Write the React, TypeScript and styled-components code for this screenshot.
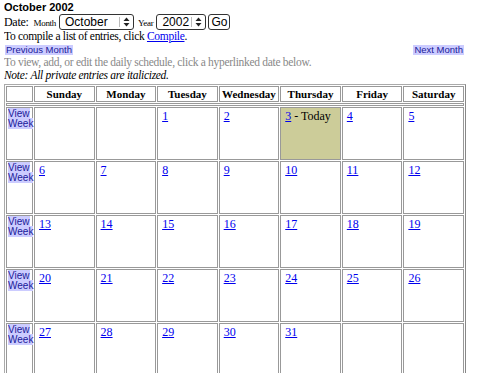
import React from 'react'
import styled, { createGlobalStyle } from 'styled-components'

const GlobalStyle = createGlobalStyle`
    body {
        margin: 2px 4px;
        background: #fff;
        font-family: 'Liberation Serif', 'Times New Roman', serif;
        font-size: 12px;
        color: #000;
    }
`;

const Title = styled.div`
    font-family: 'Liberation Sans', Arial, sans-serif;
    font-weight: bold;
    font-size: 11px;
    line-height: 11px;
`;

const DateRow = styled.div`
    display: flex;
    align-items: center;
    height: 17px;
`;

const Label = styled.span<{ $small?: boolean; $gap?: number }>`
    font-size: ${p => (p.$small ? '9px' : '12px')};
    letter-spacing: -0.3px;
    margin-left: ${p => p.$gap ?? 0}px;
    margin-right: ${p => (p.$small ? '3px' : '5px')};
    padding-top: 2px;
`;

const Popup = styled.div<{ $w: number }>`
    display: flex;
    align-items: center;
    width: ${p => p.$w}px;
    height: 14px;
    border: 1px solid #333;
    border-radius: 3px;
    background: #fff;
    font-family: 'Liberation Sans', Arial, sans-serif;
    font-size: 12px;
    margin-right: 2px;
`;

const PopupText = styled.span`
    flex: 1;
    padding-left: 5px;
    line-height: 14px;
    white-space: nowrap;
`;

const PopupArrow = styled.span`
    flex-shrink: 0;
    width: 13px;
    border-left: 1px solid #bbb;
    height: 10px;
    display: flex;
    align-items: center;
    justify-content: center;
`;

const GoButton = styled.div`
    height: 14px;
    padding: 0 2px;
    border: 1px solid #333;
    border-radius: 3px;
    font-family: 'Liberation Sans', Arial, sans-serif;
    font-size: 12px;
    line-height: 14px;
`;

const Line = styled.div<{ $gray?: boolean; $italic?: boolean }>`
    font-size: 11.5px;
    line-height: 13px;
    letter-spacing: -0.3px;
    color: ${p => (p.$gray ? '#888' : '#000')};
    font-style: ${p => (p.$italic ? 'italic' : 'normal')};
`;

const Link = styled.a`
    color: #0000ee;
    text-decoration: underline;
`;

const NavRow = styled.div`
    display: flex;
    justify-content: space-between;
    margin: 2px 9px 1px 1px;
    height: 10px;
`;

const NavLink = styled.span`
    background: #ccccff;
    color: #1a1a99;
    font-family: 'Liberation Sans', Arial, sans-serif;
    font-size: 9.5px;
    line-height: 10px;
    padding: 0 1px;
`;

const Calendar = styled.table`
    width: 462px;
    margin-top: 2px;
    border-collapse: separate;
    border-spacing: 1px;
    border: 1px solid #aaa;
    border-right-color: #888;
    border-bottom-color: #888;
    table-layout: fixed;
`;

const HeadCell = styled.th`
    border: 1px solid #999;
    height: 14px;
    padding: 0;
    font-size: 11px;
    font-weight: bold;
    text-align: center;
    line-height: 14px;
`;

const Separator = styled.td`
    border: 1px solid #999;
    height: 1px;
    padding: 0;
    line-height: 0;
    font-size: 0;
`;

const WeekCell = styled.td`
    box-sizing: border-box;
    border: 1px solid #999;
    height: 53px;
    padding: 1px;
    vertical-align: top;
    font-size: 10px;
    line-height: 10px;
`;

const ViewWeek = styled.span`
    background: #ccccff;
    color: #1a1a99;
    font-family: 'Liberation Sans', Arial, sans-serif;
    font-size: 10px;
    line-height: 10px;
`;

const DayCell = styled.td<{ $today?: boolean }>`
    box-sizing: border-box;
    border: 1px solid #999;
    height: 53px;
    padding: 2px 4px;
    vertical-align: top;
    background: ${p => (p.$today ? '#cccc99' : '#fff')};
    font-size: 12px;
    line-height: 12px;
`;

const DayLink = styled.a`
    color: #0000ee;
    text-decoration: underline;
`;

const days = ['Sunday', 'Monday', 'Tuesday', 'Wednesday', 'Thursday', 'Friday', 'Saturday'];

const weeks: (number | null)[][] = [
    [null, null, 1, 2, 3, 4, 5],
    [6, 7, 8, 9, 10, 11, 12],
    [13, 14, 15, 16, 17, 18, 19],
    [20, 21, 22, 23, 24, 25, 26],
    [27, 28, 29, 30, 31, null, null],
];

const Arrows = () => (
    <svg width="7" height="10" viewBox="0 0 7 10">
        <path d="M3.5 0.5 L6.5 4 L0.5 4 Z" fill="#222" />
        <path d="M3.5 9.5 L6.5 6 L0.5 6 Z" fill="#222" />
    </svg>
);

const App: React.FC = () => {
    return (
        <>
            <GlobalStyle />
            <Title>October 2002</Title>
            <DateRow>
                <Label>Date:</Label>
                <Label $small>Month</Label>
                <Popup $w={73}>
                    <PopupText>October</PopupText>
                    <PopupArrow><Arrows /></PopupArrow>
                </Popup>
                <Label $small $gap={2}>Year</Label>
                <Popup $w={48}>
                    <PopupText>2002</PopupText>
                    <PopupArrow><Arrows /></PopupArrow>
                </Popup>
                <GoButton>Go</GoButton>
            </DateRow>
            <Line>
                To compile a list of entries, click <Link href="#">Compile</Link>.
            </Line>
            <NavRow>
                <NavLink>Previous Month</NavLink>
                <NavLink>Next Month</NavLink>
            </NavRow>
            <Line $gray>To view, add, or edit the daily schedule, click a hyperlinked date below.</Line>
            <Line $italic>Note: All private entries are italicized.</Line>
            <Calendar>
                <colgroup>
                    <col style={{ width: 27 }} />
                    {days.map(d => <col key={d} />)}
                </colgroup>
                <thead>
                    <tr>
                        <HeadCell />
                        {days.map(d => <HeadCell key={d}>{d}</HeadCell>)}
                    </tr>
                </thead>
                <tbody>
                    <tr>
                        <Separator colSpan={8} />
                    </tr>
                    {weeks.map((week, i) => (
                        <tr key={i}>
                            <WeekCell><ViewWeek>View<br />Week</ViewWeek></WeekCell>
                            {week.map((n, j) => (
                                <DayCell key={j} $today={n === 3}>
                                    {n !== null && <DayLink href="#">{n}</DayLink>}
                                    {n === 3 && ' - Today'}
                                </DayCell>
                            ))}
                        </tr>
                    ))}
                </tbody>
            </Calendar>
        </>
    )
}

export default App
